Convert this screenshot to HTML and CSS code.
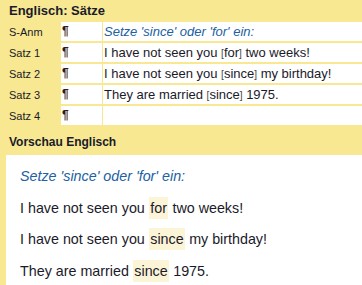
FILE: index.html
```html
<!DOCTYPE html>
<html>
<head>
<meta charset="utf-8">
<link rel="stylesheet" href="styles.css">
</head>
<body>
<div class="page">
  <section class="editor">
    <h1 class="title">Englisch: Sätze</h1>
    <div class="grid">
      <div class="label">S-Anm</div><div class="pil">¶</div><div class="cell italic">Setze 'since' oder 'for' ein:</div>
      <div class="label">Satz 1</div><div class="pil">¶</div><div class="cell">I have not seen you <span class="br">[</span>for<span class="br">]</span> two weeks!</div>
      <div class="label">Satz 2</div><div class="pil">¶</div><div class="cell">I have not seen you <span class="br">[</span>since<span class="br">]</span> my birthday!</div>
      <div class="label">Satz 3</div><div class="pil">¶</div><div class="cell">They are married <span class="br">[</span>since<span class="br">]</span> 1975.</div>
      <div class="label">Satz 4</div><div class="pil">¶</div><div class="cell"></div>
    </div>
  </section>
  <section class="preview">
    <h2 class="title2">Vorschau Englisch</h2>
    <div class="panel">
      <p class="pline italic">Setze 'since' oder 'for' ein:</p>
      <p class="pline">I have not seen you <span class="hl">for</span> two weeks!</p>
      <p class="pline">I have not seen you <span class="hl">since</span> my birthday!</p>
      <p class="pline">They are married <span class="hl">since</span> 1975.</p>
    </div>
  </section>
</div>
</body>
</html>
```
FILE: styles.css
```css
html, body {
  margin: 0;
  padding: 0;
}
body {
  width: 362px;
  height: 285px;
  overflow: hidden;
  background: #f7e891;
  font-family: "Liberation Sans", Arial, sans-serif;
  color: #1a1a2a;
}
.page {
  display: flex;
  flex-direction: column;
}
.title {
  margin: 0;
  height: 22px;
  padding-left: 9px;
  font-size: 13px;
  font-weight: bold;
  line-height: 22px;
}
.grid {
  display: grid;
  grid-template-columns: 60px 41px 1fr;
  grid-auto-rows: 19px;
  row-gap: 2px;
  column-gap: 1px;
  padding-bottom: 2px;
}
.label {
  font-size: 11px;
  line-height: 21px;
  padding-left: 9px;
}
.pil {
  background: #fff;
  font-size: 12px;
  font-weight: bold;
  line-height: 18px;
  padding-left: 1px;
  color: #3a1a10;
}
.cell {
  background: #fff;
  font-size: 13px;
  line-height: 19px;
  padding-left: 1px;
  white-space: nowrap;
}
.italic {
  font-style: italic;
  color: #2160a2;
}
.br {
  font-size: 10px;
  color: #444;
}
.title2 {
  margin: 0;
  height: 28px;
  padding-left: 9px;
  font-size: 12px;
  font-weight: bold;
  line-height: 30px;
}
.panel {
  margin-left: 6px;
  background: #fff;
  height: 130px;
  padding: 6px 0 0 14px;
  box-sizing: border-box;
}
.pline {
  margin: 0;
  font-size: 14.3px;
  line-height: 31.5px;
  white-space: nowrap;
}
.hl {
  background: #fcf4d6;
  padding: 3px 1.5px;
}
```
